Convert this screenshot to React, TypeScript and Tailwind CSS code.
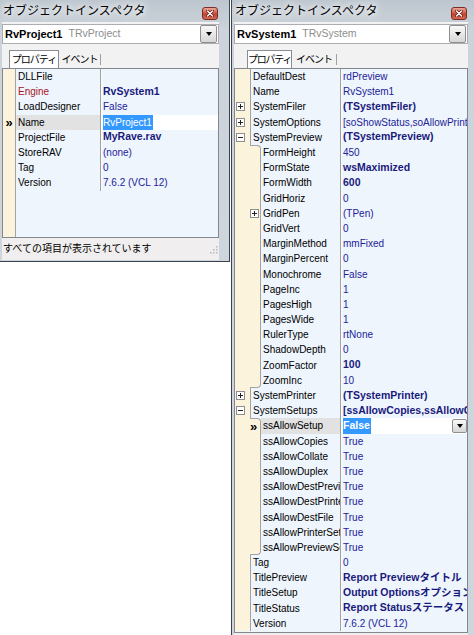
import clsx from "clsx";

type Prop = {
  name: string;
  value?: string;
  level?: 0 | 1;
  box?: "plus" | "minus";
  bold?: boolean;
  red?: boolean;
  selected?: boolean;
  edge?: "first" | "last";
};

const leftProps: Prop[] = [
  { name: "DLLFile", value: "" },
  { name: "Engine", value: "RvSystem1", bold: true, red: true },
  { name: "LoadDesigner", value: "False" },
  { name: "Name", value: "RvProject1", selected: true },
  { name: "ProjectFile", value: "MyRave.rav", bold: true },
  { name: "StoreRAV", value: "(none)" },
  { name: "Tag", value: "0" },
  { name: "Version", value: "7.6.2 (VCL 12)" },
];

const rightProps: Prop[] = [
  { name: "DefaultDest", value: "rdPreview" },
  { name: "Name", value: "RvSystem1" },
  { name: "SystemFiler", value: "(TSystemFiler)", box: "plus", bold: true },
  { name: "SystemOptions", value: "[soShowStatus,soAllowPrintFromPreview,soPreviewCenter]", box: "plus" },
  { name: "SystemPreview", value: "(TSystemPreview)", box: "minus", bold: true },
  { name: "FormHeight", value: "450", level: 1, edge: "first" },
  { name: "FormState", value: "wsMaximized", level: 1, bold: true },
  { name: "FormWidth", value: "600", level: 1, bold: true },
  { name: "GridHoriz", value: "0", level: 1 },
  { name: "GridPen", value: "(TPen)", level: 1, box: "plus" },
  { name: "GridVert", value: "0", level: 1 },
  { name: "MarginMethod", value: "mmFixed", level: 1 },
  { name: "MarginPercent", value: "0", level: 1 },
  { name: "Monochrome", value: "False", level: 1 },
  { name: "PageInc", value: "1", level: 1 },
  { name: "PagesHigh", value: "1", level: 1 },
  { name: "PagesWide", value: "1", level: 1 },
  { name: "RulerType", value: "rtNone", level: 1 },
  { name: "ShadowDepth", value: "0", level: 1 },
  { name: "ZoomFactor", value: "100", level: 1, bold: true },
  { name: "ZoomInc", value: "10", level: 1, edge: "last" },
  { name: "SystemPrinter", value: "(TSystemPrinter)", box: "plus", bold: true },
  { name: "SystemSetups", value: "[ssAllowCopies,ssAllowCollate,ssAllowDuplex]", box: "minus", bold: true },
  { name: "ssAllowSetup", value: "False", level: 1, bold: true, selected: true, edge: "first" },
  { name: "ssAllowCopies", value: "True", level: 1 },
  { name: "ssAllowCollate", value: "True", level: 1 },
  { name: "ssAllowDuplex", value: "True", level: 1 },
  { name: "ssAllowDestPreview", value: "True", level: 1 },
  { name: "ssAllowDestPrinter", value: "True", level: 1 },
  { name: "ssAllowDestFile", value: "True", level: 1 },
  { name: "ssAllowPrinterSetup", value: "True", level: 1 },
  { name: "ssAllowPreviewSetup", value: "True", level: 1, edge: "last" },
  { name: "Tag", value: "0" },
  { name: "TitlePreview", value: "Report Previewタイトル", bold: true },
  { name: "TitleSetup", value: "Output Optionsオプション", bold: true },
  { name: "TitleStatus", value: "Report Statusステータス", bold: true },
  { name: "Version", value: "7.6.2 (VCL 12)" },
];

function Box({ minus }: { minus?: boolean }) {
  return (
    <svg width="9" height="9" viewBox="0 0 9 9" className="shrink-0">
      <rect x="0.5" y="0.5" width="8" height="8" fill="#fff" stroke="#8e8e8e" />
      <path d="M2 4.5h5" stroke="#222" />
      {!minus && <path d="M4.5 2v5" stroke="#222" />}
    </svg>
  );
}

function Marker() {
  return <span className="text-[13px] font-bold leading-none text-black">»</span>;
}

function DropButton({ small }: { small?: boolean }) {
  return (
    <div
      className={clsx(
        "flex shrink-0 items-center justify-center rounded-[2px] border border-[#8f8f8f] bg-[linear-gradient(to_bottom,#f8f8f8,#e8e8e8_50%,#d6d6d6)]",
        small ? "h-[14px] w-[15px]" : "mr-[1px] h-[18px] w-[17px]"
      )}
    >
      <div className="h-0 w-0 border-x-[3.5px] border-t-[4px] border-x-transparent border-t-black" />
    </div>
  );
}

function PropRow({ p, wide }: { p: Prop; wide: boolean }) {
  const sub = p.level === 1;
  return (
    <div className="flex h-[15.2px] shrink-0 items-stretch">
      {/* gutter */}
      {wide ? (
        sub ? (
          <>
            <div className="w-[15px] shrink-0 bg-[#fcf3dd]" />
            <div
              className={clsx(
                "flex w-[11px] shrink-0 items-center border-r border-[#a3a3a3] bg-[#fcf3dd]",
                p.edge === "first" && "rounded-tr-[4px] border-t",
                p.edge === "last" && "rounded-br-[4px] border-b"
              )}
            >
              {p.box && <Box minus={p.box === "minus"} />}
              {p.selected && <Marker />}
            </div>
          </>
        ) : (
          <div className="flex w-[16px] shrink-0 items-center border-r border-[#a3a3a3] bg-[#fcf3dd] pl-[1px]">
            {p.box && <Box minus={p.box === "minus"} />}
          </div>
        )
      ) : (
        <div className="flex w-[13px] shrink-0 items-center justify-center border-r border-[#a3a3a3] bg-[#fcf3dd]">
          {p.selected && <Marker />}
        </div>
      )}

      {/* name */}
      <div
        className={clsx(
          "flex shrink-0 items-center overflow-hidden whitespace-nowrap pl-[2px] text-[10px]",
          wide ? (sub ? "w-[79px]" : "w-[89px]") : "w-[84px]",
          p.selected && "bg-[#e2e2e2]",
          p.red ? "text-[#a8141f]" : "text-black"
        )}
      >
        {p.name}
      </div>
      <div className="w-px shrink-0 bg-[#a0a0a0]" />
      <div className="w-px shrink-0 bg-white/70" />

      {/* value */}
      <div
        className={clsx(
          "flex min-w-0 flex-1 items-center overflow-hidden whitespace-nowrap pl-[1px]",
          p.selected && "bg-white",
          p.bold ? "text-[10.5px] font-bold text-[#1a1a7c]" : "text-[10px] text-[#22229a]"
        )}
      >
        {p.selected ? (
          <>
            <span className="bg-[#3399ff] pr-[1px] text-white">{p.value}</span>
            {wide && (
              <div className="ml-auto">
                <DropButton small />
              </div>
            )}
          </>
        ) : (
          p.value
        )}
      </div>
    </div>
  );
}

function TitleBar() {
  return (
    <div className="flex h-[22px] shrink-0 justify-between">
      <span className="mt-[4px] pl-[1px] text-[12px] leading-[14px] text-black [text-shadow:0_0_5px_#fff,0_0_9px_#fff,0_0_13px_#fff]">
        オブジェクトインスペクタ
      </span>
      <div className="mr-[1px] mt-[7px] flex h-[13px] w-[16px] items-center justify-center rounded-[3px] border border-[#7a2e25] bg-[linear-gradient(to_bottom,#eaa797,#d45a45_45%,#c0412e_55%,#d66b55)]">
        <svg width="8" height="7" viewBox="0 0 8 7">
          <path d="M1.5 1l5 5M6.5 1l-5 5" stroke="#5a1a14" strokeWidth="2.6" strokeLinecap="round" />
          <path d="M1.5 1l5 5M6.5 1l-5 5" stroke="#fff" strokeWidth="1.4" strokeLinecap="round" />
        </svg>
      </div>
    </div>
  );
}

function Combo({ name, type }: { name: string; type: string }) {
  return (
    <div className="mt-[2px] flex h-[20px] shrink-0 items-center border border-[#abadb3] bg-white">
      <span className="pl-[2px] text-[11px] font-bold text-black">{name}</span>
      <span className="pl-[6px] text-[10.5px] text-[#8d8d8d]">{type}</span>
      <div className="ml-auto">
        <DropButton />
      </div>
    </div>
  );
}

function Tabs({ wide }: { wide: boolean }) {
  return (
    <div className={clsx("mt-[6px] flex h-[18px] shrink-0 items-end", wide ? "ml-[13px]" : "ml-[7px]")}>
      <div
        className={clsx(
          "flex h-[18px] items-center justify-center whitespace-nowrap border border-b-0 border-[#898c95] bg-white text-[10px] text-black",
          wide ? "w-[45px] tracking-[-1.3px]" : "w-[50px] tracking-[-1px]"
        )}
      >
        プロパティ
      </div>
      <div
        className={clsx(
          "flex h-[18px] items-center justify-center whitespace-nowrap text-[10px] tracking-[-1px] text-black",
          wide ? "w-[44px]" : "w-[41px]"
        )}
      >
        イベント
      </div>
      <div className="mb-[3px] h-[11px] w-px bg-[#a0a0a0]" />
    </div>
  );
}

export default function App() {
  return (
    <div className="flex h-[635px] w-[474px] items-start overflow-hidden bg-white [font-family:'Liberation_Sans','Noto_Sans_CJK_JP',sans-serif]">
      {/* RvProject1 inspector */}
      <div className="flex h-[262px] w-[230px] shrink-0 flex-col border-b border-r border-[#39424d] bg-[linear-gradient(to_bottom,#bdc6cf,#ccd3da_30px,#cfd5dc)] pb-[1px] pl-[2px] pr-[10px]">
        <TitleBar />
        <div className="flex flex-1 flex-col bg-[#f2f2f2]">
          <Combo name="RvProject1" type="TRvProject" />
          <Tabs wide={false} />
          <div className="flex h-[170px] shrink-0 flex-col overflow-hidden border border-[#828790] bg-[#eef5fc]">
            {leftProps.map((p) => (
              <PropRow key={p.name} p={p} wide={false} />
            ))}
            <div className="flex flex-1">
              <div className="w-[13px] border-r border-[#a3a3a3] bg-[#fcf3dd]" />
            </div>
          </div>
          <div className="flex h-[22px] shrink-0 items-center justify-between bg-[#f0eeee] pl-[1px] pr-[1px]">
            <span className="text-[10px] leading-none text-black">すべての項目が表示されています</span>
            <svg width="8" height="8" viewBox="0 0 8 8" className="mt-[8px] self-start">
              <g fill="#b8b8b8">
                <rect x="6" y="0" width="1.5" height="1.5" />
                <rect x="3" y="3" width="1.5" height="1.5" />
                <rect x="6" y="3" width="1.5" height="1.5" />
                <rect x="0" y="6" width="1.5" height="1.5" />
                <rect x="3" y="6" width="1.5" height="1.5" />
                <rect x="6" y="6" width="1.5" height="1.5" />
              </g>
            </svg>
          </div>
        </div>
      </div>

      {/* RvSystem1 inspector */}
      <div className="ml-[1px] flex h-[635px] w-[243px] shrink-0 flex-col border-l border-[#39424d] bg-[linear-gradient(to_bottom,#bdc6cf,#ccd3da_30px,#cfd5dc)] pl-[2px] pr-[6px]">
        <TitleBar />
        <div className="flex flex-1 flex-col bg-[#f2f2f2]">
          <Combo name="RvSystem1" type="TRvSystem" />
          <Tabs wide={true} />
          <div className="flex h-[565px] shrink-0 flex-col overflow-hidden border border-[#828790] bg-[#eef5fc]">
            {rightProps.map((p, i) => (
              <PropRow key={p.name + i} p={p} wide={true} />
            ))}
          </div>
          <div className="h-[22px] shrink-0 bg-[#f0eeee]" />
        </div>
      </div>
    </div>
  );
}
